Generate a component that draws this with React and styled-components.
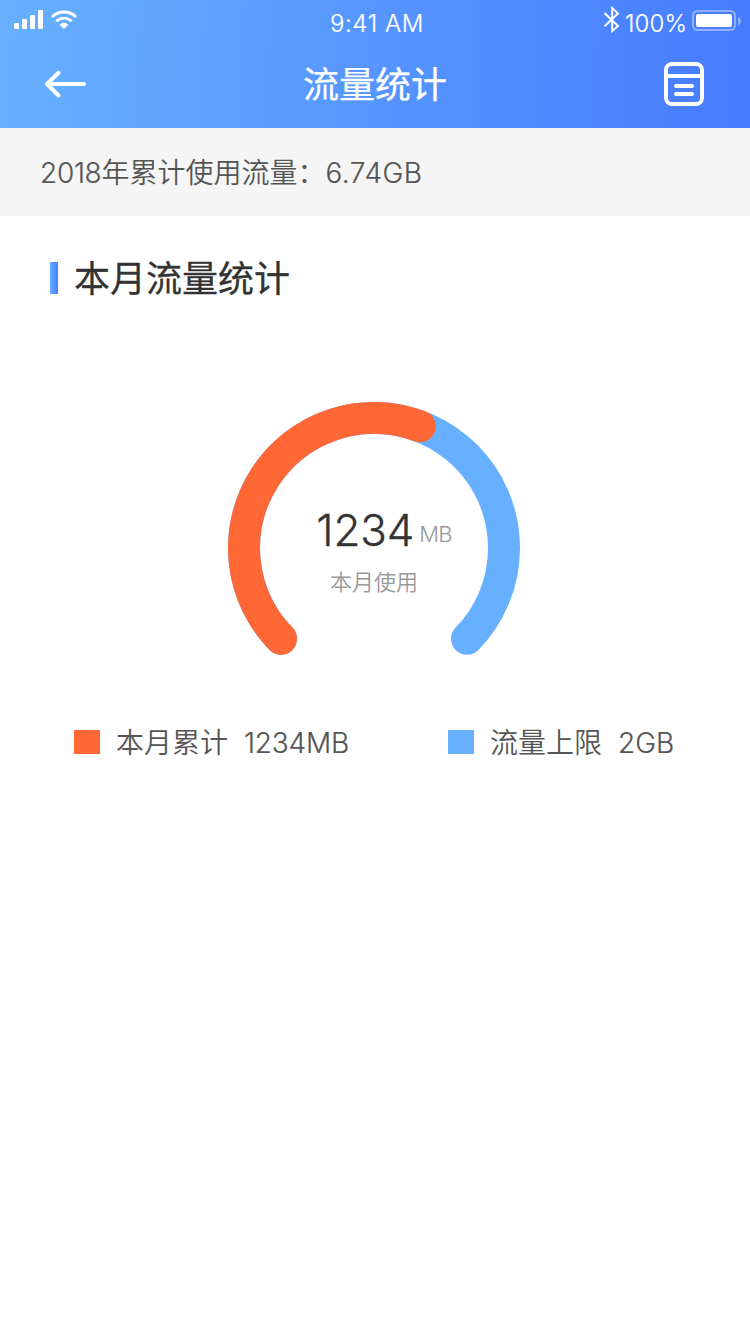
import React from "react";
import styled, { createGlobalStyle } from "styled-components";

const GlobalStyle = createGlobalStyle`
  * { box-sizing: border-box; }
  body {
    margin: 0;
    background: #fff;
    font-family: Inter, "Noto Sans CJK SC", sans-serif;
  }
`;

const Screen = styled.div`
  width: 750px;
  min-height: 1334px;
  background: #fff;
`;

const Header = styled.header`
  height: 128px;
  color: #fff;
  background: linear-gradient(92deg, #66b0ff 0%, #467bff 100%);
`;

const StatusBar = styled.div`
  height: 40px;
  display: grid;
  grid-template-columns: 1fr auto 1fr;
  align-items: start;
`;

const StatusGroup = styled.div`
  display: flex;
  height: 40px;
  justify-content: ${({ $end }) => ($end ? "flex-end" : "flex-start")};
  svg { display: block; flex: none; }
`;

const NavBar = styled.div`
  height: 88px;
  padding: 0 44px;
  display: flex;
  align-items: center;
  justify-content: space-between;
  svg { display: block; }
`;

const Label = styled.span`
  display: inline-block;
  white-space: pre;
  font-size: ${({ $size }) => $size}px;
  line-height: ${({ $line }) => $line || 40}px;
  font-weight: ${({ $weight }) => $weight || 400};
  letter-spacing: ${({ $track }) => $track || 0}px;
  color: ${({ $color }) => $color || "inherit"};
  margin: ${({ $margin }) => $margin || 0};
  -webkit-text-stroke: ${({ $stroke }) => $stroke || 0}px currentColor;
`;

const SummaryBar = styled.section`
  height: 88px;
  padding: 0 40px;
  display: flex;
  align-items: center;
  background: #f5f5f5;
`;

const SectionTitle = styled.h2`
  margin: 0;
  height: 124px;
  padding-left: 50px;
  display: flex;
  align-items: center;
  gap: 16px;
`;

const TitleMark = styled.span`
  width: 8px;
  height: 32px;
  background: linear-gradient(90deg, #66b0ff, #467bff);
`;

const Gauge = styled.div`
  display: grid;
  width: 292px;
  height: 292px;
  margin: 62px 0 0 228px;
  > * { grid-area: 1 / 1; }
`;

const GaugeText = styled.div`
  display: flex;
  flex-direction: column;
  align-items: center;
  padding-top: 98px;
`;

const ValueRow = styled.div`
  height: 60px;
  display: flex;
  align-items: flex-start;
  padding-left: 20px;
`;

const Legend = styled.div`
  display: flex;
  padding: 28px 0 0 74px;
`;

const LegendItem = styled.div`
  flex: none;
  width: ${({ $width }) => $width}px;
  height: 40px;
  display: flex;
  align-items: center;
`;

const Swatch = styled.span`
  width: 26px;
  height: 24px;
  margin-right: 16px;
  background: ${({ $color }) => $color};
`;

const SignalIcon = () => (
  <svg width="90" height="40" viewBox="0 0 90 40" fill="#fff">
    <rect x="14" y="23" width="5" height="6" rx="1" />
    <rect x="22" y="19" width="5" height="10" rx="1" />
    <rect x="30" y="15" width="5" height="14" rx="1" />
    <rect x="38" y="10" width="5" height="19" rx="1" />
    <g fill="none" stroke="#fff" strokeWidth="2.9">
      <path d="M52 17 A17 17 0 0 1 76 17" />
      <path d="M56.3 21.3 A10.9 10.9 0 0 1 71.7 21.3" />
    </g>
    <path d="M64 29 L59.6 24.7 A6.2 6.2 0 0 1 68.4 24.7 Z" />
  </svg>
);

const BluetoothIcon = () => (
  <svg width="16" height="40" viewBox="604 0 16 40" fill="none" stroke="#fff" strokeWidth="2">
    <path d="M604.5 13 L618 26 L612.2 31 V8 L618 13.4 L604.5 26.2" />
  </svg>
);

const BatteryIcon = () => (
  <svg width="58" height="40" viewBox="692 0 58 40" fill="#fff">
    <rect x="693" y="11" width="42" height="19" rx="4.5" fill="none" stroke="#fff" strokeOpacity=".4" strokeWidth="2" />
    <rect x="696" y="14" width="36" height="13" rx="2" />
    <path d="M738 17 A4.2 4.2 0 0 1 738 25 Z" fillOpacity=".4" />
  </svg>
);

const BackIcon = () => (
  <svg width="42" height="28" viewBox="44 70 42 28" fill="none" stroke="#fff" strokeWidth="4" strokeLinecap="round" strokeLinejoin="round">
    <path d="M84 84 H47 M58.5 72.8 L47 84 L58.5 95.5" />
  </svg>
);

const RecordIcon = () => (
  <svg width="42" height="44" viewBox="664 62 42 44" fill="none" stroke="#fff" strokeWidth="4">
    <rect x="666" y="64" width="36" height="40" rx="6" />
    <path d="M666 76 H702" />
    <path d="M676 86 H692 M676 94 H692" strokeLinecap="round" />
  </svg>
);

const RADIUS = 130;

const arc = (from, to) => {
  const point = (deg) => {
    const a = (deg * Math.PI) / 180;
    return `${(146 + RADIUS * Math.cos(a)).toFixed(3)} ${(146 + RADIUS * Math.sin(a)).toFixed(3)}`;
  };
  return `M${point(from)} A${RADIUS} ${RADIUS} 0 ${to - from > 180 ? 1 : 0} 1 ${point(to)}`;
};

export default function App() {
  return (
    <Screen>
      <GlobalStyle />
      <Header>
        <StatusBar>
          <StatusGroup><SignalIcon /></StatusGroup>
          <Label $size={24} $line={47} $weight={300} $track={0.6} $margin="0 0 0 4px" $stroke={0.2}>9:41 AM</Label>
          <StatusGroup $end>
            <BluetoothIcon />
            <Label $size={24} $line={47} $weight={300} $track={0.1} $margin="0 5px 0 5px" $stroke={0.2}>100%</Label>
            <BatteryIcon />
          </StatusGroup>
        </StatusBar>
        <NavBar>
          <BackIcon />
          <Label $size={36} $stroke={0.25} $margin="2px 0 0">流量统计</Label>
          <RecordIcon />
        </NavBar>
      </Header>
      <SummaryBar>
        <Label $size={28} $weight={300} $track={-0.3} $color="#555" $stroke={0.2} $margin="1px 0 0">2018</Label>
        <Label $size={28} $weight={350} $color="#555" $margin="2px 0 0">年累计使用流量：</Label>
        <Label $size={28} $weight={300} $track={0.5} $color="#555" $stroke={0.2} $margin="1px 0 0">6.74GB</Label>
      </SummaryBar>
      <SectionTitle>
        <TitleMark />
        <Label $size={36} $color="#333" $stroke={0.3} $margin="2px 0 0">本月流量统计</Label>
      </SectionTitle>
      <Gauge>
        <svg width="292" height="292" viewBox="0 0 292 292" fill="none" strokeWidth="32" strokeLinecap="round">
          <path d={arc(135.7, 404.3)} stroke="#66b0ff" />
          <path d={arc(135.7, 290.6)} stroke="#ff6734" />
        </svg>
        <GaugeText>
          <ValueRow>
            <Label $size={44} $line={61} $weight={300} $track={-0.2} $color="#333" $stroke={0.3}>1234</Label>
            <Label $size={22} $line={68} $weight={300} $track={-0.8} $color="#999" $margin="0 0 0 5px">MB</Label>
          </ValueRow>
          <Label $size={22} $line={45} $weight={350} $color="#999">本月使用</Label>
        </GaugeText>
      </Gauge>
      <Legend>
        <LegendItem $width={374}>
          <Swatch $color="#ff6734" />
          <Label $size={28} $weight={350} $color="#555" $margin="2px 0 0">本月累计</Label>
          <Label $size={28} $weight={300} $track={-0.2} $color="#555" $stroke={0.2} $margin="1px 0 0 16px">1234MB</Label>
        </LegendItem>
        <LegendItem $width={240}>
          <Swatch $color="#66b0ff" />
          <Label $size={28} $weight={350} $color="#555" $margin="2px 0 0">流量上限</Label>
          <Label $size={28} $weight={300} $track={0} $color="#555" $stroke={0.2} $margin="1px 0 0 16px">2GB</Label>
        </LegendItem>
      </Legend>
    </Screen>
  );
}
